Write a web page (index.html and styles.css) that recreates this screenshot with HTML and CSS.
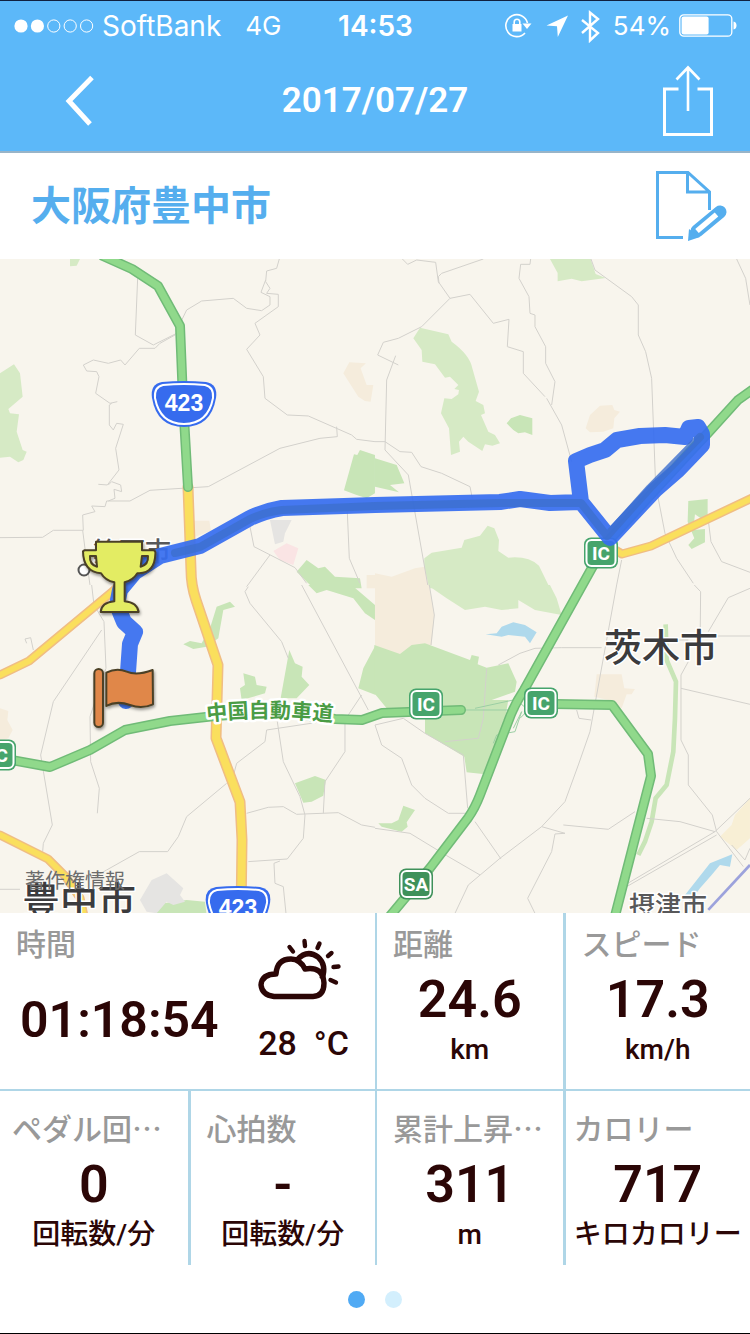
FILE: index.html
```html
<!DOCTYPE html>
<html lang="ja">
<head>
<meta charset="utf-8">
<meta name="viewport" content="width=device-width, initial-scale=1">
<title>2017/07/27</title>
<link rel="stylesheet" href="styles.css">
</head>
<body>
<div class="app">
  <div class="top">
    <div class="status">
      <div class="status-side status-left">
        <svg class="signal" viewBox="0 0 80 16" aria-hidden="true">
          <g fill="#fff"><circle cx="7" cy="8" r="6.6"/><circle cx="23.4" cy="8" r="6.6"/></g>
          <g fill="none" stroke="#fff" stroke-width="1"><circle cx="39.8" cy="8" r="6.1"/><circle cx="56.2" cy="8" r="6.1"/><circle cx="72.6" cy="8" r="6.1"/></g>
        </svg>
        <span class="carrier">SoftBank</span>
        <span class="network">4G</span>
      </div>
      <span class="clock">14:53</span>
      <div class="status-side status-right">
        <svg class="glyphs" viewBox="0 0 98 34" aria-hidden="true">
          <path d="M21 24A11 11 0 1 1 23.500 14" fill="none" stroke="#fff" stroke-width="1.600"/>
          <path d="M18.500 14.500h9l-4.500 5.500z" fill="#fff"/>
          <path d="M8.500 15h9v7.500h-9z" fill="#fff"/>
          <path d="M10.200 15.500V13a2.800 2.800 0 0 1 5.600 0v2.500" fill="none" stroke="#fff" stroke-width="1.600"/>
          <path d="M64 6.500 42.500 16.500l10.500.8.800 10.700z" fill="#fff"/>
          <path d="M78 11 94 24l-8 7.500V3.500L94 10 78 24" fill="none" stroke="#fff" stroke-width="2.400"/>
        </svg>
        <span>54%</span>
        <svg class="battery" viewBox="0 0 58 24" aria-hidden="true">
          <rect x=".8" y=".8" width="52" height="21.400" rx="4" fill="none" stroke="#fff" stroke-width="1.300"/>
          <rect x="2.600" y="2.600" width="27" height="17.800" rx="2" fill="#fff"/>
          <path d="M54.500 7.500q3 .5 3 4t-3 4z" fill="#fff"/>
        </svg>
      </div>
    </div>
    <header class="nav">
      <button class="icon-btn back" aria-label="戻る">
        <svg viewBox="0 0 30 52"><path d="M27 2.500 4 26 25 49" fill="none" stroke="#fff" stroke-width="5"/></svg>
      </button>
      <h1 class="date">2017/07/27</h1>
      <button class="icon-btn share" aria-label="共有">
        <svg viewBox="0 0 50 72" fill="none" stroke="#fff">
          <path d="M15.500 24H1.500v45.500h47V24h-14" stroke-width="3"/>
          <path d="M25 46V3M13.500 14.500 25 2.500l11.500 12" stroke-width="2.600"/>
        </svg>
      </button>
    </header>
  </div>

  <section class="place">
    <h2 class="place-name">大阪府豊中市</h2>
    <button class="icon-btn edit" aria-label="編集">
      <svg viewBox="0 0 72 70" fill="none" stroke="#55aeee" stroke-width="3">
        <path d="M28 66.500H2.500V1.500H33l21.500 19.500V39M32.500 1.500V21h22"/>
        <path d="M65 41 42 60" stroke-width="13" stroke-linecap="round"/>
        <path d="M34 58 33 70 45 66z" fill="#55aeee" stroke="none"/>
        <path d="M61.500 43.500 42 60" stroke="#fff" stroke-width="5.500"/>
      </svg>
    </button>
  </section>

  <svg class="map" viewBox="0 259 750 654" preserveAspectRatio="xMidYMid slice" role="img" aria-label="走行ルートの地図">
    <defs>
      <filter id="shade" x="-20%" y="-20%" width="150%" height="150%"><feDropShadow dx="3" dy="6" stdDeviation="5" flood-opacity=".4"/></filter>
      <path id="c1" d="M103 256 132 269 158 286 180 326 183 400 188 487"/>
      <path id="c2" d="M0 758 50 767 90 750 125 730 170 721 215 716 275 712 335 719 362 720 382 713 461 710"/>
      <path id="c3" d="M555 704 612 705 648 754 651 776 615 916"/>
      <path id="c4" d="M390 916 430 868 468 818Q475 808 480 795L508 722Q514 705 524 690L603 548 612 537 690 452 708 433 738 400 752 390"/>
      <path id="y1" d="M188 487 191 570Q191 585 196 600L218 665 216 738 240 802 242 840 241 916"/>
      <path id="y2" d="M0 675 29 661 112 592 135 572M0 835 48 859 66 877 80 898 84 916M610 547 622 554 651 546 752 498"/>
    </defs>
    <rect class="land" y="250" width="750" height="680"/>

    <g transform="translate(0 255) scale(.3333)">
      <path class="park" d="M0 355 42 328 60 355 68 425 25 462 30 475 57 478 50 530 68 585 80 590 70 615 55 622 30 605 0 608zM210 12h30l-10 20-20 2z"/>
      <path class="park2" d="M1125 600 1080 585 1072 600 1062 598 1032 706 1070 720 1100 730 1125 715zM890 950l30-35 35 25 20-5 30 30 75 5 5 30H940z"/>
      <path class="sand" d="M1030 355 1048 322 1098 325 1082 340 1100 390 1120 390 1112 440 1095 438 1075 425zM583 797h45l5 30-50 20zM1100 960h30v40h-30z"/>
      <path class="grey" d="M810 795 875 795 855 835 850 860 825 868z"/>
      <path class="pink" d="M820 888 860 865 895 880 880 930 840 915z"/>
      <path class="line" d="M413 70 406 240 460 270 530 235M543 200 560 165 605 138 700 130 740 160 785 167 810 150 810 125 783 112 797 75M838 12 830 40 800 48 797 80 810 100 800 115 835 118 835 155 765 205 780 240 740 283 790 365 795 430 862 480 925 483 1055 540 1070 553 1125 560M1010 515 1012 545 960 550 840 580 625 695 450 706 390 738 320 738 315 755 275 753 285 770 248 780 250 826 160 826 128 847 0 848M248 826 260 920 270 990M525 240 480 265 465 280 418 280 375 330 362 315 325 325 280 315 250 330 260 348 290 350 297 365 287 415 330 445 352 440M335 445 328 450 328 510 340 525 350 505 370 508 347 580 357 645 322 690 295 688M325 690 335 680 362 690 365 710 342 703 345 730 325 738M1042 770 1048 910 1080 985M750 815 762 875 885 938 920 985M810 900 740 995"/>
    </g>
    <g transform="translate(375 255) scale(.3333)">
      <path class="park" d="M115 250 135 218 220 238 230 260Q285 300 292 340L312 410 302 438 325 450 330 475 318 480 340 530 360 540 375 565 352 572 330 568 322 588 280 560 265 545 252 560 255 590 228 600 222 520 198 475 208 430 230 432 250 418 252 405 238 402 250 390 225 365 210 368 180 328 142 320 140 285zM525 12h122l15 45 30 12-72 10-30-8-42 8v-25zM145 1000 148 910 170 893 260 878 268 855 315 842 338 812 358 820 372 855 370 888 400 908Q460 902 492 932L525 1000z"/>
      <path class="park2" d="M0 610 65 630 88 685 45 690 72 712 0 695zM395 505 408 490 435 480 472 490 472 540 450 532 430 535 415 525zM940 738 998 732 998 780 985 795 960 778 955 825 990 822 990 862 950 882 940 870 958 850 938 800z"/>
      <path class="sand" d="M632 520 645 480 675 452 712 450 718 465 735 470 718 490 715 520 685 530 645 532zM0 955l50 10 70-25 28-5 15 65H0z"/>
      <path class="line" d="M82 12 98 28 125 15 182 22 190 80 225 130 285 118 355 205 402 193 397 275 445 290 445 355 510 425M325 12 200 55 190 65 192 85M225 130 140 215 70 250 25 262 8 300 70 330M62 302 35 375 30 585 100 660 160 1000M30 560 75 590 110 592 138 635 200 655 285 695 292 730M467 12 465 28 437 28 432 70 462 125 465 175 480 180 480 215 512 275 512 325 540 380 530 450M515 430 560 510 590 620M648 12 660 45 770 125 790 150 790 240 812 290 830 370 842 690 870 835 905 910 955 985M1085 12 1112 70 1125 150M740 915 725 990M998 780 1008 860 1040 920 1125 952M0 560H30"/>
    </g>
    <g transform="translate(0 585) scale(.3333)">
      <path class="park2" d="M550 178 570 168 605 175 630 130 650 65 690 50 705 65 670 75 655 160 620 185 580 192zM725 345 720 310 735 300 730 265 765 275 770 300 800 305 795 325zM842 340 868 195 885 235 908 245 905 275 928 300 890 340zM885 595 945 573 978 585 970 632 935 650 910 653zM465 985 490 955 560 945 615 950 620 990zM925 0h130l70 60v45l-30-20-35-45-80-25-30 10zM1127 180v150l-52-20 15-60z"/>
      <path class="sand" d="M0 370 25 378 22 405 38 435 25 460 0 470z"/>
      <path class="grey" d="M420 945 455 885 500 865 550 910 540 930 555 950 520 960 500 950 470 985 440 980z"/>
      <path class="line" d="M275 0 282 60 312 110 318 250 270 395 272 530 298 610 292 685M305 135 160 350 122 510 157 720 130 775 128 800M100 195 92 158 75 162 80 175M745 5 735 20 750 55 845 170 865 220M905 0 1105 375M1125 400 1000 405 800 435 795 470 710 535 702 565M680 595 560 695 535 755 503 800 418 800 320 855 285 875M832 410 850 530 900 635 915 690M740 685 805 667 850 665 890 688 1015 683 1085 720 1125 727M970 685 975 590 1035 500 1035 405 1085 330M915 690 910 760 862 822 745 830M840 828 822 835 825 895 850 905 858 985M0 913H60M740 340 705 395"/>
    </g>
    <g transform="translate(375 585) scale(.3333)">
      <path class="sand" d="M0 0H163L178 90 170 180 75 210 0 185zM665 268 740 268 748 310 780 312 770 328 755 328 740 370 700 345 658 335z"/>
      <path class="sand2" d="M1125 640 1080 690 1070 720 1035 755 1085 795 1125 760z"/>
      <path class="park" d="M165 5 160 0H525L545 40 560 90 480 75 430 45 430 70 380 75 330 65 270 75 215 40z"/>
      <path class="park2" d="M-2 180 75 207 110 180 150 175 285 225 290 210 312 215 308 238 335 248 400 235 425 290 420 320 350 345 400 345 385 430 330 568 275 562 268 515 150 445 150 380 35 370 -2 325zM10 715 20 725 80 740 98 725 95 712 120 675 85 662 70 705 50 715z"/>
      <path class="river" d="M872 118 875 225 903 290 900 400 895 500 875 600 842 640 830 710 810 770 790 810"/>
      <path class="water" d="M332 148 365 145 380 125 415 112 450 120 485 142 465 175 450 155 400 150 380 155zM930 930 985 860 1005 835 1072 808 1065 845 1035 840 1010 870 975 910 945 950z"/>
      <path class="line" d="M163 0 178 90 168 180M725 0 645 440 610 540 570 650 500 725 375 820 280 900 240 985M560 188H680M435 205 480 190 560 188M435 205 370 240M605 375 612 400 648 405M958 0 977 20 975 210M1125 10 1060 38 1000 140M975 153H1125M940 230 918 270 918 310 1125 358M918 310V465L940 510V600L1012 690 1025 740 1105 845M815 700 915 710 1020 740 1125 640M1020 740 750 900M1025 750 755 905M300 710 378 822M280 685H220L150 640 110 600 80 520 20 480 0 420 85 400 150 445 265 510 278 670M0 730 105 745 215 812 315 870M500 725 570 745 540 747 530 800 458 940 480 985M565 720 700 733 780 680M1070 780 1110 825 1125 790M335 250 325 400 310 460 210 470M870 165H940"/>
      <path class="ramp" d="M270 375 430 375M300 370 415 345M355 475 365 450 420 440 440 380 415 430M430 350 460 375M435 400 470 365"/>
      <path class="rail" d="M1000 975 1125 840"/>
    </g>

    <g class="yellow"><use href="#y2" class="edge small"/><use href="#y1" class="edge"/><use href="#y2" class="fill small"/><use href="#y1" class="fill"/></g>
    <g class="green"><use href="#c1" class="edge"/><use href="#c2" class="edge"/><use href="#c3" class="edge"/><use href="#c4" class="edge"/><use href="#c1" class="fill"/><use href="#c2" class="fill"/><use href="#c3" class="fill"/><use href="#c4" class="fill"/></g>

    <path id="roadname" d="M207 721Q270 714 335 722" fill="none"/>
    <text class="road-label"><textPath href="#roadname">中国自動車道</textPath></text>

    <circle cx="84" cy="570" r="5.500" fill="#fff" stroke="#555" stroke-width="2"/>
    <text class="town" x="93" y="561">箕面市</text>
    <text class="city" x="604" y="661">茨木市</text>
    <text class="town" x="629" y="915">摂津市</text>
    <text class="city" x="22" y="914">豊中市</text>
    <text class="copyright" x="25" y="888">著作権情報</text>

    <g id="shield" transform="translate(184 404)">
      <path d="M-22-22Q0-24 22-22 34-20 32-6 27 23 0 23T-32-6Q-34-20-22-22z" fill="#366bee"/>
      <path d="M-21-19Q0-21 21-19 30-17 29-6 24 20 0 20T-29-6Q-30-17-21-19z" fill="none" stroke="#fff" stroke-width="2"/>
      <text class="shield-no" y="7">423</text>
    </g>
    <use href="#shield" x="54" y="505"/>

    <g class="signs">
      <g transform="translate(601 553)"><rect class="sign-out" x="-17" y="-15.500" width="34" height="31" rx="7"/><rect class="sign-in" x="-14.500" y="-13" width="29" height="26" rx="5"/><text y="7">IC</text></g>
      <g transform="translate(426 704)"><rect class="sign-out" x="-17" y="-15.500" width="34" height="31" rx="7"/><rect class="sign-in" x="-14.500" y="-13" width="29" height="26" rx="5"/><text y="7">IC</text></g>
      <g transform="translate(541 703)"><rect class="sign-out" x="-17" y="-15.500" width="34" height="31" rx="7"/><rect class="sign-in" x="-14.500" y="-13" width="29" height="26" rx="5"/><text y="7">IC</text></g>
      <g transform="translate(-1 755)"><rect class="sign-out" x="-17" y="-15.500" width="34" height="31" rx="7"/><rect class="sign-in" x="-14.500" y="-13" width="29" height="26" rx="5"/><text y="7">IC</text></g>
      <g class="service" transform="translate(416 884)"><rect class="sign-out" x="-17" y="-15.500" width="34" height="31" rx="7"/><rect class="sign-in" x="-14.500" y="-13" width="29" height="26" rx="5"/><text y="7">SA</text></g>
    </g>

    <path class="route" d="M126 701 128 672 130 644 135 632 124 622 117 605 120 590 135 572 160 556 200 546 250 518Q265 511 282 508L375 505 500 502 520 499 550 503 581 502 576 461 590 455 605 450 617 440 640 436 665 435 685 437 689 428 698 427 702 434 702 445 678 470 655 490 610 538 581 502"/>
    <path class="route-core" d="M175 553 200 547 250 519Q265 512 282 510L375 506 500 503 581 503 607 536 650 488 700 437"/>

    <g class="pin" transform="translate(60 520) scale(.3333)" filter="url(#shade)">
      <path fill="#e3ec64" fill-rule="evenodd" d="M108 65H246V91H280Q288 92 286 103 284 158 238 160H232Q220 180 194 187V244Q232 248 236 276H122Q124 248 163 244V187Q136 182 123 160 70 156 69 94L73 91H108zM108 108H90Q88 134 111 140zM246 108H264Q266 134 242 140z"/>
    </g>
    <g class="pin" transform="translate(60 520) scale(.3333)" filter="url(#shade)">
      <rect x="103" y="447" width="26" height="174" rx="13" fill="#e08749"/>
      <path fill="#e08749" d="M139 458Q170 442 200 455 230 468 278 450L279 553Q245 568 210 555 170 541 139 558z"/>
    </g>
  </svg>

  <main class="stats">
    <section class="cell summary">
      <div class="elapsed">
        <h3 class="label">時間</h3>
        <p class="value">01:18:54</p>
      </div>
      <div class="weather">
        <svg viewBox="0 0 84 64" aria-label="晴れ時々曇り" fill="none" stroke="#2b0606">
          <path d="M18 37Q19 22 33 22 42 22 47 32 65 29 66 46 66 59 55 59.500H16Q4 58 3 48 4 37 18 37z" stroke-width="5.400" stroke-linejoin="round"/>
          <path d="M39 23Q49 12 60 20 69 28 64 42" stroke-width="5.400"/>
          <path d="m31.500 10 3.500 4.500M46.500 4l.5 5M61.500 6.500 59.500 11M73.500 16 70 19M80.500 29.500l-5 .5M72.500 43l5.500 2.500" stroke-width="4.400" stroke-linecap="round"/>
        </svg>
        <p class="temp">28 &nbsp;°C</p>
      </div>
    </section>
    <section class="cell"><h3 class="label">距離</h3><p class="value">24.6</p><p class="unit">km</p></section>
    <section class="cell thick"><h3 class="label">スピード</h3><p class="value">17.3</p><p class="unit">km/h</p></section>
    <section class="cell lower first"><h3 class="label">ペダル回…</h3><p class="value">0</p><p class="unit">回転数/分</p></section>
    <section class="cell lower thick"><h3 class="label">心拍数</h3><p class="value">-</p><p class="unit">回転数/分</p></section>
    <section class="cell lower"><h3 class="label">累計上昇…</h3><p class="value">311</p><p class="unit">m</p></section>
    <section class="cell lower thick tight"><h3 class="label">カロリー</h3><p class="value">717</p><p class="unit">キロカロリー</p></section>
  </main>

  <nav class="pager">
    <button class="dot current" aria-label="1ページ"></button>
    <button class="dot" aria-label="2ページ"></button>
  </nav>
</div>
</body>
</html>
```
FILE: styles.css
```css
* { box-sizing: border-box; }

body, h1, h2, h3, p { margin: 0; }

body {
  background: #fff;
  color: #2b0606;
  font-family: Roboto, "Noto Sans CJK JP", sans-serif;
}

button {
  padding: 0;
  border: 0;
  background: none;
}

svg { display: block; }

.app {
  display: flex;
  flex-direction: column;
  min-height: 100vh;
  border-top: 1px solid #102040;
  border-bottom: 1px solid #000;
}

.top {
  background: #5cb8f9;
  border-bottom: 2px solid #98b4c8;
  color: #fff;
}

.status {
  display: grid;
  grid-template-columns: 1fr auto 1fr;
  align-items: center;
  height: 50px;
  padding: 0 13px 0 14px;
  font: 26px/32px Inter, "Noto Sans", sans-serif;
}

.status-side {
  display: flex;
  align-items: center;
  gap: 8px;
}

.status-left, .clock { font-size: 28px; }
.status-right { justify-content: flex-end; }
.signal { width: 80px; height: 16px; }
.carrier { margin-right: 16px; }
.network { font-size: 26px; }
.clock { font-weight: 600; }
.glyphs { width: 98px; height: 34px; margin-right: 3px; }
.battery { width: 58px; height: 24px; }

.nav {
  display: grid;
  grid-template-columns: 1fr auto 1fr;
  align-items: center;
  height: 100px;
  padding: 0 37px 0 65px;
}

.back { width: 30px; }
.share { width: 50px; justify-self: end; }

.date {
  font-size: 35px;
  line-height: 48px;
  font-weight: 600;
  padding-right: 28px;
}

.place {
  display: flex;
  align-items: center;
  justify-content: space-between;
  height: 106px;
  padding: 0 23px 0 31px;
}

.place-name {
  padding-bottom: 6px;
  color: #55aeee;
  font: 700 40px/56px "Noto Sans CJK JP", sans-serif;
}

.edit { width: 72px; }

.map {
  flex: 1 1 654px;
  width: 100%;
  min-height: 0;
}

.land { fill: #f8f5ed; }
.park { fill: #d6eac5; }
.park2 { fill: #c8e5b7; }
.sand { fill: #f5ecdc; }
.sand2 { fill: #f8efd5; }
.grey { fill: #e5e4e2; }
.pink { fill: #fae4e4; }
.water { fill: #afd9ec; }
.river { fill: none; stroke: #c8e5b7; stroke-width: 14; }
.line { fill: none; stroke: #d3d1cc; stroke-width: 3; }
.ramp { fill: none; stroke: #9ccfa4; stroke-width: 3; }
.rail { fill: none; stroke: #9ca2dc; stroke-width: 8; }

.edge, .fill { fill: none; stroke-linejoin: round; stroke-linecap: round; }
.yellow .edge { stroke: #f0bd83; stroke-width: 11; }
.yellow .fill { stroke: #fadf5d; stroke-width: 8; }
.yellow .edge.small { stroke-width: 9; }
.yellow .fill.small { stroke-width: 6; }
.green .edge { stroke: #70bb77; stroke-width: 10; }
.green .fill { stroke: #90d98b; stroke-width: 7; }

.route, .route-core { fill: none; stroke-linejoin: round; stroke-linecap: round; }
.route { stroke: #356df0; stroke-width: 16; stroke-opacity: .92; }
.route-core { stroke: #3c6fce; stroke-width: 8; stroke-opacity: .8; }

.pin { stroke: #4b4126; stroke-width: 6; stroke-linejoin: round; }

.map text { font-family: "Noto Sans CJK JP", sans-serif; paint-order: stroke; stroke-linejoin: round; }
.city { font-size: 38px; font-weight: 500; fill: #3b3b3d; stroke: #fff; stroke-width: 3; }
.town { font-size: 26px; font-weight: 500; fill: #58585a; stroke: #fff; stroke-width: 3; }
.copyright { font-size: 20px; fill: #6c6c6c; }
.road-label { font-size: 21px; font-weight: 700; fill: #4a9c45; stroke: #fff; stroke-width: 5; }
.map .shield-no { font: 700 23px "Liberation Sans", sans-serif; fill: #fff; text-anchor: middle; }

.sign-out { fill: #46a46c; }
.sign-in { fill: #46a46c; stroke: #fff; stroke-width: 2; }
.service rect { fill: #3f915a; }
.signs text { font: 700 19px Roboto, sans-serif; fill: #fff; text-anchor: middle; }

.stats {
  display: grid;
  grid-template-columns: repeat(4, 1fr);
}

.cell {
  min-width: 0;
  height: 178px;
  padding-top: 9px;
  border-left: 2px solid #afd6e7;
  border-bottom: 2px solid #afd6e7;
  text-align: center;
}

.thick { border-left-width: 3px; }

.summary {
  display: flex;
  grid-column: span 2;
  justify-content: space-between;
  border-left: 0;
}

.lower {
  height: 174px;
  padding-top: 16px;
  border-bottom: 0;
}

.first { border-left: 0; }

.label {
  padding-left: 16px;
  color: #999;
  font: 500 30px/40px "Noto Sans CJK JP", sans-serif;
  text-align: left;
  white-space: nowrap;
}

.first .label { padding-left: 12px; }
.tight .label { padding-left: 8px; }

.value {
  margin-top: 8px;
  font-size: 52px;
  line-height: 60px;
  font-weight: 600;
}

.unit {
  margin-top: 2px;
  font: 500 28px/36px Roboto, "Noto Sans CJK JP", sans-serif;
  white-space: nowrap;
}

.elapsed .value {
  margin-top: 28px;
  padding-left: 20px;
  font-size: 50px;
}

.weather {
  display: flex;
  flex-direction: column;
  gap: 20px;
  padding: 15px 26px 0 0;
}

.weather svg { width: 84px; height: 64px; }

.temp {
  font-size: 34px;
  line-height: 44px;
  font-weight: 500;
  white-space: nowrap;
}

.pager {
  display: flex;
  justify-content: center;
  align-items: center;
  gap: 20px;
  height: 68px;
}

.dot {
  width: 17px;
  height: 17px;
  border-radius: 50%;
  background: #d3effd;
}

.current { background: #50aaf4; }
```
